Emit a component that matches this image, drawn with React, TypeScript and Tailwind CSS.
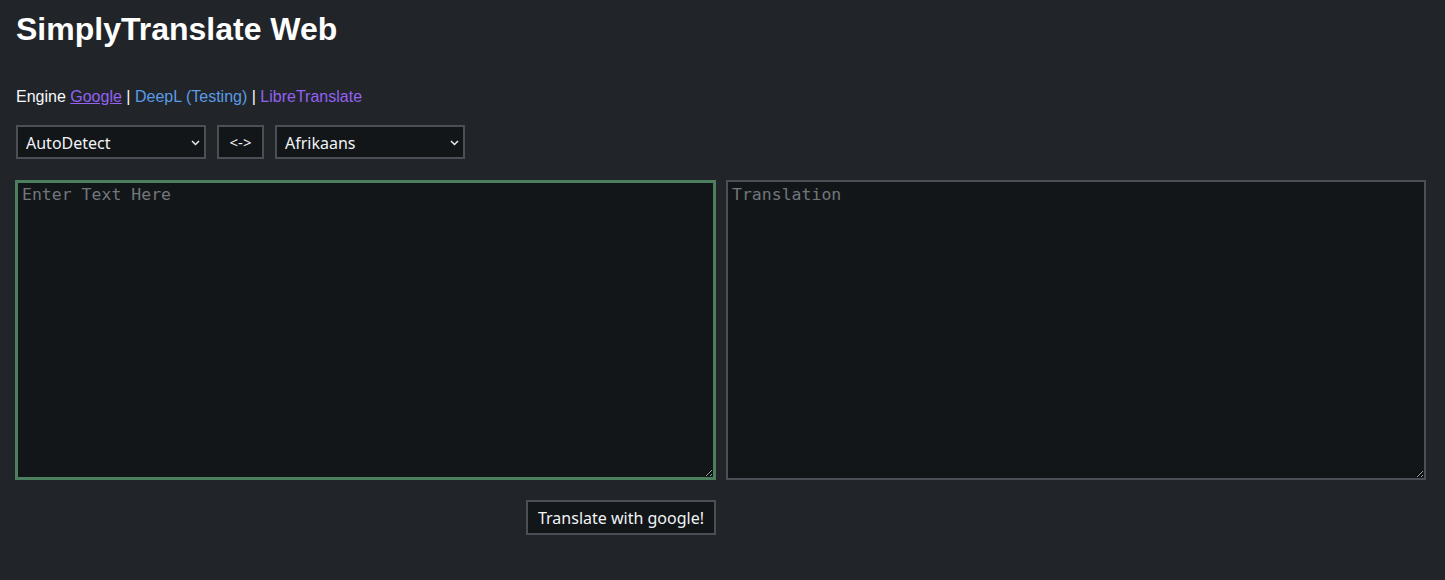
export default function App() {
  const langSelect = (value: string) => (
    <div className="relative">
      <select
        defaultValue={value}
        className="h-[34px] w-[190px] appearance-none border-2 border-[#4b5056] bg-[#131619] pl-[8px] pt-[1px] text-[16px] text-[#f1f3f5] outline-none [font-family:'Noto_Sans',sans-serif]"
      >
        <option>{value}</option>
      </select>
      <svg
        className="pointer-events-none absolute right-[6px] top-[15px]"
        width="9"
        height="6"
        viewBox="0 0 9 6"
        fill="none"
        stroke="#e9ecef"
        strokeWidth="1.5"
      >
        <path d="M1 1l3.5 3.5L8 1" />
      </svg>
    </div>
  )

  return (
    <div className="min-h-[580px] bg-[#212529] px-[16px] pt-[11px] text-[#f8f9fa] [font-family:'Liberation_Sans',Arial,sans-serif]">
      <h1 className="text-[32px] font-bold leading-[37px] text-white">SimplyTranslate Web</h1>

      <p className="mt-[40px] text-[16px] leading-[18px]">
        Engine <a href="#" className="text-[#9461f2] underline">Google</a> |{" "}
        <a href="#" className="text-[#5b9be6]">DeepL (Testing)</a> |{" "}
        <a href="#" className="text-[#9461f2]">LibreTranslate</a>
      </p>

      <div className="mt-[19px] flex gap-[11px]">
        {langSelect("AutoDetect")}
        <button className="h-[34px] w-[47px] border-2 border-[#4b5056] bg-[#131619] text-[15px] text-[#f1f3f5] [font-family:'Noto_Sans',sans-serif]">
          &lt;-&gt;
        </button>
        {langSelect("Afrikaans")}
      </div>

      <div className="-ml-[1px] mt-[21px] flex gap-[10px]">
        <div className="flex w-[701px] flex-col items-end">
          <textarea
            autoFocus
            placeholder="Enter Text Here"
            className="h-[300px] w-full border-[3px] border-[#4b7f5e] bg-[#131619] px-[4px] pt-0 text-[16.5px] text-[#e9ecef] outline-none placeholder:text-[#72777c] [font-family:'DejaVu_Sans_Mono',monospace]"
          />
          <button className="mt-[20px] h-[35px] w-[190px] border-2 border-[#4b5056] bg-[#131619] text-[16px] text-[#f1f3f5] [font-family:'Noto_Sans',sans-serif]">
            Translate with google!
          </button>
        </div>
        <textarea
          readOnly
          placeholder="Translation"
          className="h-[300px] w-[700px] border-2 border-[#4b5056] bg-[#131619] px-[4px] pt-[1px] text-[16.5px] text-[#e9ecef] outline-none placeholder:text-[#72777c] [font-family:'DejaVu_Sans_Mono',monospace]"
        />
      </div>
    </div>
  )
}
